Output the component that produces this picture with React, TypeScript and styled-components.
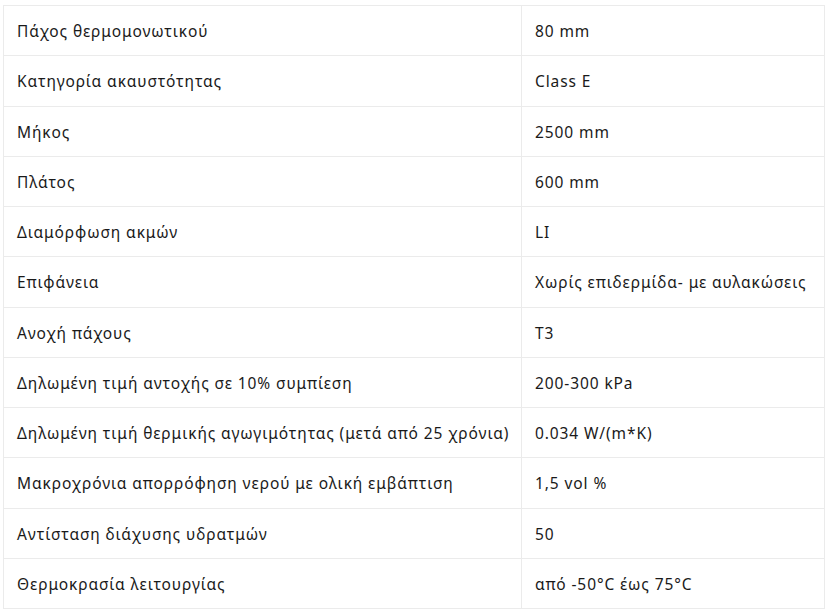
import React from "react";
import styled, { createGlobalStyle } from "styled-components";

const GlobalStyle = createGlobalStyle`
  html, body {
    margin: 0;
    padding: 0;
    background: #ffffff;
  }
  body {
    font-family: "Noto Sans", "DejaVu Sans", sans-serif;
  }
`;

const Page = styled.div`
  padding: 5px 3px 0 3px;
  width: 822px;
`;

const Table = styled.div`
  display: grid;
  grid-template-columns: 517px 1fr;
  border-left: 1px solid #ebebeb;
  border-right: 1px solid #ebebeb;
  border-top: 1px solid #ebebeb;
`;

const Cell = styled.div<{ $last?: boolean }>`
  height: 49.25px;
  display: flex;
  align-items: center;
  padding-left: 13px;
  padding-top: 1px;
  box-sizing: border-box;
  height: 50.25px;
  border-bottom: 1px solid #ebebeb;
  border-left: ${(p) => (p.$last ? "1px solid #ebebeb" : "none")};
  font-size: 15.5px;
  letter-spacing: 0.9px;
  color: #1a1a1a;
  white-space: nowrap;
  overflow: hidden;
`;

const rows: [string, string][] = [
  ["Πάχος θερμομονωτικού", "80 mm"],
  ["Κατηγορία ακαυστότητας", "Class E"],
  ["Μήκος", "2500 mm"],
  ["Πλάτος", "600 mm"],
  ["Διαμόρφωση ακμών", "LI"],
  ["Επιφάνεια", "Χωρίς επιδερμίδα- με αυλακώσεις"],
  ["Ανοχή πάχους", "T3"],
  ["Δηλωμένη τιμή αντοχής σε 10% συμπίεση", "200-300 kPa"],
  ["Δηλωμένη τιμή θερμικής αγωγιμότητας (μετά από 25 χρόνια)", "0.034 W/(m*K)"],
  ["Μακροχρόνια απορρόφηση νερού με ολική εμβάπτιση", "1,5 vol %"],
  ["Αντίσταση διάχυσης υδρατμών", "50"],
  ["Θερμοκρασία λειτουργίας", "από -50°C έως 75°C"],
];

export default function App() {
  return (
    <>
      <GlobalStyle />
      <Page>
        <Table>
          {rows.map(([label, value], idx) => (
            <React.Fragment key={idx}>
              <Cell>{label}</Cell>
              <Cell $last>{value}</Cell>
            </React.Fragment>
          ))}
        </Table>
      </Page>
    </>
  );
}
